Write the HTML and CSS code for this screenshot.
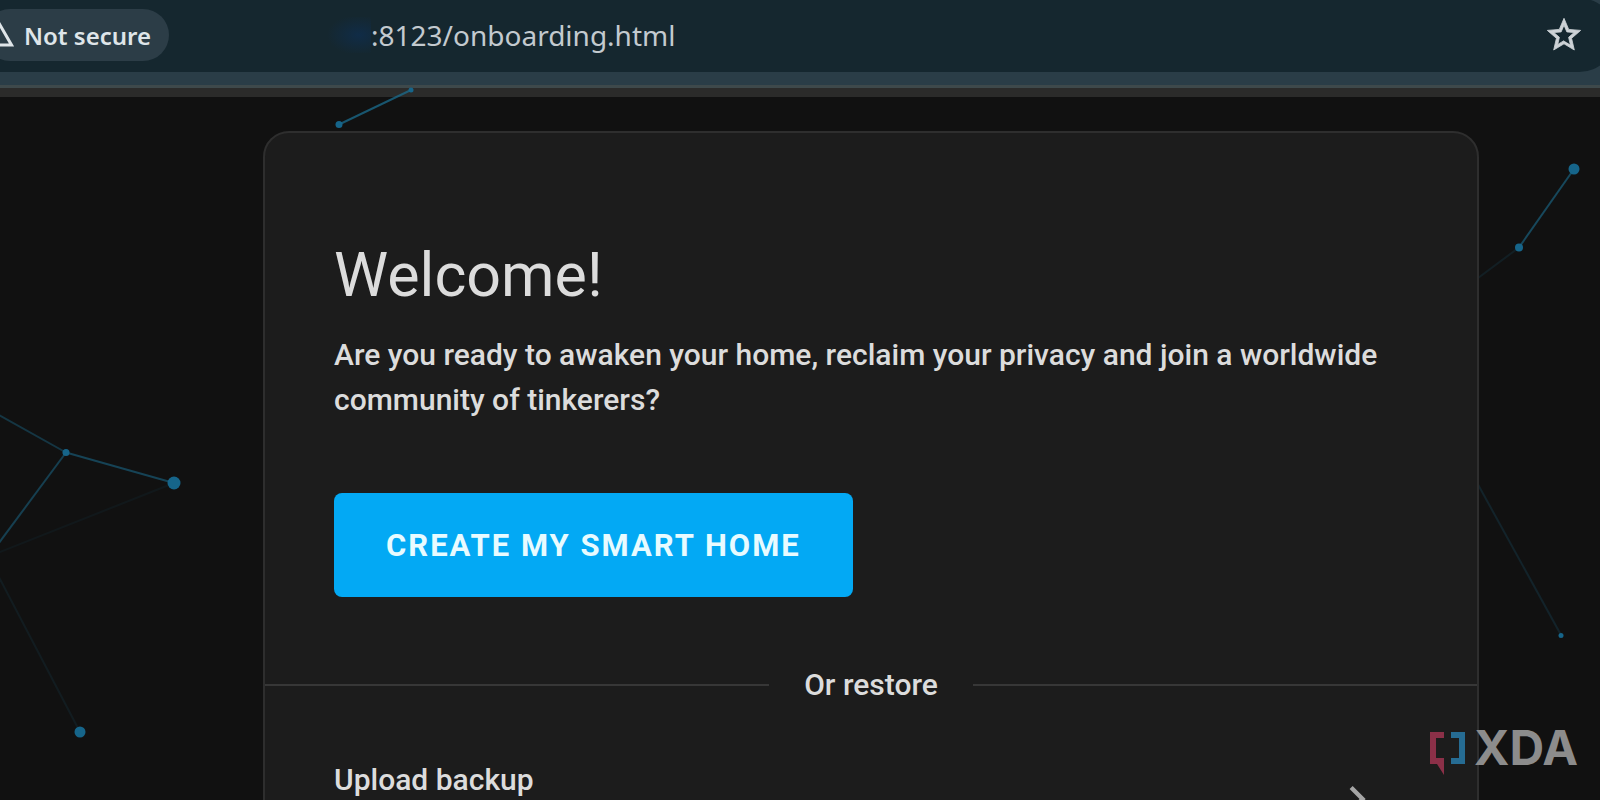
FILE: index.html
```html
<!DOCTYPE html>
<html lang="en">
<head>
  <meta charset="UTF-8" />
  <meta name="viewport" content="width=device-width, initial-scale=1.0" />
  <title>Onboarding</title>
  <link rel="stylesheet" href="styles.css">
</head>
<body>
  <header class="toolbar">
    <div class="omnibox">
      <button class="security" type="button">
        <svg class="warning" viewBox="0 0 28 26" aria-hidden="true">
          <path d="M14 3 L25.500 23 H2.500 Z" />
        </svg>
        Not secure
      </button>
      <span class="host"></span>
      <input class="url" type="text" value=":8123/onboarding.html" aria-label="Address" />
      <button class="bookmark" type="button" aria-label="Bookmark this page">
        <svg viewBox="0 0 24 24" aria-hidden="true">
          <path d="M12 15.390l-3.760 2.270.990-4.280-3.320-2.880 4.380-.370L12 6.090l1.710 4.040 4.380.370-3.320 2.880.990 4.280M22 9.240l-7.190-.610L12 2 9.190 8.630 2 9.240l5.450 4.730L5.820 21 12 17.270 18.180 21l-1.640-7.030L22 9.240z" />
        </svg>
      </button>
    </div>
  </header>

  <svg class="particles" viewBox="0 0 1600 800" preserveAspectRatio="xMidYMin slice" aria-hidden="true">
    <g class="links">
      <path d="M339 124.500 L411 90" opacity=".75" />
      <path d="M1574 169 L1519 247.500" opacity=".6" />
      <path d="M1519 247.500 L1470 284" opacity=".15" />
      <path d="M1470 470 L1561 635" opacity=".2" />
      <path d="M-10 410 L66 452.500" opacity=".4" />
      <path d="M66 452.500 L174 483" opacity=".55" />
      <path d="M66 452.500 L-10 555" opacity=".5" />
      <path d="M174 483 L-10 556" opacity=".08" />
      <path d="M-10 560 L80 732" opacity=".12" />
    </g>
    <g class="nodes">
      <circle cx="339" cy="124.500" r="3.500" />
      <circle cx="411" cy="90" r="2.500" />
      <circle cx="1574" cy="169" r="5.500" />
      <circle cx="1519" cy="247.500" r="4" />
      <circle cx="1561" cy="635.500" r="2.500" />
      <circle cx="66" cy="452.500" r="3.500" />
      <circle cx="174" cy="483" r="6.500" />
      <circle cx="80" cy="732" r="5.500" />
    </g>
  </svg>

  <main class="card">
    <section class="welcome">
      <h1>Welcome!</h1>
      <p>Are you ready to awaken your home, reclaim your privacy and join a worldwide community of tinkerers?</p>
      <button class="start" type="button">CREATE MY SMART HOME</button>
    </section>
    <div class="divider"><span>Or restore</span></div>
    <a class="option" href="#">
      <span>Upload backup</span>
      <svg class="chevron" viewBox="0 0 24 24" aria-hidden="true">
        <path d="M8.590 16.580L13.170 12 8.590 7.410 10 6l6 6-6 6z" />
      </svg>
    </a>
  </main>

  <div class="watermark">
    <svg viewBox="0 0 36 44" aria-hidden="true">
      <path fill="#8b3048" d="M0 0h14v6H6v20h8v17L7 32H0z" />
      <path fill="#266c93" d="M21 0h14v32H21v-6h8V6h-8z" />
    </svg>
    <span>XDA</span>
  </div>
</body>
</html>
```
FILE: styles.css
```css
* {
  box-sizing: border-box;
}
body {
  margin: 0;
  height: 100vh;
  overflow: hidden;
  position: relative;
  background: #111;
  color: #dcdcdc;
  font-family: Roboto, sans-serif;
  font-size: 30px;
  font-weight: 500;
  line-height: 45px;
}
button, input {
  font: inherit;
  border: none;
  background: none;
  padding: 0;
}

/* browser toolbar */
.toolbar {
  height: 97px;
  background: #2a3d47;
  border-bottom: 9px solid #2b2b2a;
  box-shadow: inset 0 -3px #3e494b;
  overflow: hidden;
  font-family: "Segoe UI", "Noto Sans", sans-serif;
  font-weight: 400;
}
.omnibox {
  display: flex;
  align-items: center;
  height: 74px;
  margin: -2px -16px 0 -48px;
  padding: 0 32px;
  border-radius: 37px;
  background: #15272f;
}
.security {
  display: flex;
  align-items: center;
  gap: 10px;
  height: 52px;
  padding: 0 18px 0 2px;
  border-radius: 26px;
  background: #2c3d47;
  color: #dfe5e9;
  font-size: 24px;
  font-weight: 600;
}
.warning {
  width: 28px;
  height: 26px;
  fill: none;
  stroke: #dfe5e9;
  stroke-width: 3;
}
.host {
  width: 202px;
  height: 36px;
  background: radial-gradient(ellipse 32px 20px at 190px 18px, #102c47, transparent);
}
.url {
  flex: 1;
  min-width: 0;
  color: #c3cacf;
  font-size: 28px;
}
.bookmark {
  width: 40px;
  height: 40px;
}
.bookmark svg {
  display: block;
  fill: #cdd2d6;
  stroke: #cdd2d6;
  stroke-width: .5;
}

/* animated background */
.particles {
  position: absolute;
  top: 0;
  left: 0;
  width: 100%;
  height: 100%;
}
.links {
  stroke: #1b6d8f;
  stroke-width: 2;
}
.nodes {
  fill: #16658a;
}

/* onboarding card */
.card {
  position: relative;
  width: 76%;
  margin: 34px 0 0 263px;
  border: 2px solid #2e2e2e;
  border-radius: 26px;
  background: #1c1c1c;
}
.welcome {
  padding: 107px 69px 65px;
}
h1 {
  margin: 0;
  font-size: 61px;
  font-weight: 400;
  line-height: 70px;
}
p {
  margin: 22px 0 71px;
}
.start {
  height: 104px;
  padding: 0 52px;
  border-radius: 8px;
  background: #03a9f4;
  color: #e8fbff;
  font-size: 31px;
  font-weight: 700;
  letter-spacing: 2px;
  cursor: pointer;
}
.divider {
  display: flex;
  align-items: center;
  gap: 35px;
}
.divider::before,
.divider::after {
  content: "";
  flex: 1;
  height: 2px;
  background: #373737;
}
.option {
  display: flex;
  justify-content: space-between;
  height: 140px;
  padding: 50px 94px 0 69px;
  color: inherit;
  text-decoration: none;
}
.chevron {
  width: 52px;
  height: 52px;
  margin-top: 16px;
  fill: #a5a5a5;
}

.watermark {
  position: absolute;
  right: 22px;
  bottom: 24px;
  display: flex;
  gap: 8px;
  color: #8c8c8c;
  font: 700 48px/46px Inter, sans-serif;
}
.watermark svg {
  width: 36px;
  height: 44px;
  margin-top: 7px;
}
```
